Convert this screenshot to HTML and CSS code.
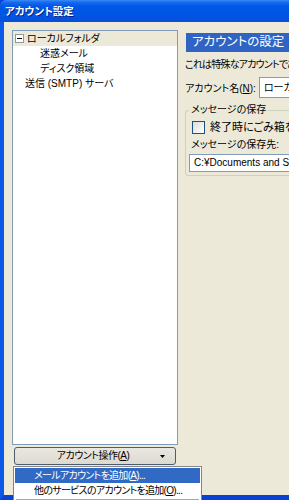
FILE: index.html
```html
<!DOCTYPE html>
<html lang="ja">
<head>
    <meta charset="UTF-8">
    <title>アカウント設定</title>
    <link rel="stylesheet" href="styles.css">
</head>
<body>
    <div class="window">
        <div class="titlebar">アカウント設定</div>
        <div class="frame">
            <div class="dialog">
                <div class="left">
                    <div class="tree">
                        <div class="row root selected">
                            <svg class="exp" width="9" height="9" viewBox="0 0 9 9"><rect x="0.5" y="0.5" width="8" height="8" fill="#fff" stroke="#919b9c"/><path d="M2 4.5h5" stroke="#000"/></svg>
                            <span>ローカルフォルダ</span>
                        </div>
                        <div class="row child">迷惑メール</div>
                        <div class="row child">ディスク領域</div>
                        <div class="row top">送信 (SMTP) サーバ</div>
                    </div>
                    <div class="action-btn">
                        <span>アカウント操作(<u>A</u>)</span>
                        <svg class="arrow" width="5" height="3" viewBox="0 0 5 3"><path d="M0 0h5L2.5 3z" fill="#000"/></svg>
                    </div>
                </div>
                <div class="right">
                    <div class="header">アカウントの設定</div>
                    <p class="note">これは特殊なアカウントであり、関連付けられたユーザ識別子はありません。</p>
                    <div class="field">
                        <label>アカウント名(<u>N</u>):</label>
                        <div class="input name">ローカルフォルダ</div>
                    </div>
                    <fieldset class="group">
                        <legend>メッセージの保存</legend>
                        <div class="check">
                            <span class="box"></span>
                            <span>終了時にごみ箱を空にする(<u>X</u>)</span>
                        </div>
                        <div class="sub">メッセージの保存先:</div>
                        <div class="input path">C:¥Documents and Settings¥user¥Application Data¥Thunderbird</div>
                    </fieldset>
                </div>
            </div>
        </div>

        <div class="menu">
            <div class="item active">メールアカウントを追加(<u>A</u>)...</div>
            <div class="item">他のサービスのアカウントを追加(<u>O</u>)...</div>
            <div class="sep"></div>
        </div>
    </div>
</body>
</html>
```

FILE: styles.css
```css
body {
    margin: 0;
    padding: 0;
    font-family: "Liberation Sans", "Noto Sans CJK JP", sans-serif;
    font-size: 10px;
    font-feature-settings: "palt";
    color: #000;
}
.window {
    position: relative;
    width: 289px;
    height: 500px;
    overflow: hidden;
    display: flex;
    flex-direction: column;
    background: #0842d4;
}
.titlebar {
    height: 22px;
    line-height: 22px;
    padding-left: 5px;
    color: #fff;
    font-weight: bold;
    font-size: 10.5px;
    text-shadow: 1px 1px 0 #0a1e8a;
    border-top-left-radius: 6px;
    background: linear-gradient(to bottom, #3d8bf5 0, #1a6cf0 2px, #0058e6 6px, #0055e3 16px, #0a4cd8 22px);
}
.frame {
    flex: 1;
    display: flex;
    border-left: 4px solid #0a58e8;
    border-bottom: 5px solid #0842d4;
    min-height: 0;
}
.dialog {
    flex: 1;
    display: flex;
    gap: 5px;
    padding: 8px 0 0 8px;
    background: #ece9d8;
    overflow: hidden;
}
.left {
    width: 166px;
    flex: none;
    display: flex;
    flex-direction: column;
}
.tree {
    height: 413px;
    background: #fff;
    border: 1px solid #7f9db9;
}
.row {
    height: 15px;
    line-height: 15px;
    white-space: nowrap;
    display: flex;
    align-items: center;
}
.row.selected {
    background: #ece9d8;
}
.root {
    padding-left: 2px;
}
.exp {
    margin-right: 3px;
}
.child {
    padding-left: 27px;
}
.top {
    padding-left: 12px;
}
.action-btn {
    margin: 2px 2px 0 2px;
    height: 16px;
    border: 1px solid #4d5c73;
    border-radius: 3px;
    background: linear-gradient(to bottom, #e9e8e1, #dcdad0);
    display: flex;
    align-items: center;
    justify-content: center;
    position: relative;
    line-height: 16px;
    letter-spacing: -0.5px;
}
.action-btn span {
    margin-right: 4px;
}
.action-btn .arrow {
    position: absolute;
    right: 10px;
    top: 7px;
}
.right {
    width: 330px;
    flex: none;
    padding-top: 3px;
}
.header {
    margin-left: 3px;
    height: 19px;
    line-height: 19px;
    padding-left: 6px;
    background: #2f64c4;
    color: #fff;
    font-size: 12.5px;
    white-space: nowrap;
}
.note {
    margin: 6px 0 0 2px;
    line-height: 14px;
    white-space: nowrap;
    letter-spacing: -0.8px;
}
.field {
    display: flex;
    align-items: center;
    margin: 5px 0 0 2px;
    gap: 3px;
}
.input {
    height: 19px;
    line-height: 19px;
    border: 1px solid #7f9db9;
    background: #fff;
    padding-left: 4px;
    white-space: nowrap;
    overflow: hidden;
}
.input.name {
    width: 200px;
}
.group {
    margin: 5px 0 0 2px;
    padding: 0 0 7px 3px;
    border: 1px solid #d0d0bf;
    border-radius: 3px;
    height: 64px;
}
.group legend {
    padding: 0 2px;
    margin-left: 0;
    line-height: 14px;
}
.check {
    display: flex;
    align-items: center;
    gap: 5px;
    margin: 3px 0 0 3px;
    white-space: nowrap;
    line-height: 14px;
    font-size: 11px;
}
.check .box {
    width: 11px;
    height: 11px;
    border: 1px solid #1c5180;
    background: linear-gradient(135deg, #dcdcd7, #fff);
}
.sub {
    margin: 4px 0 0 2px;
    line-height: 14px;
}
.input.path {
    margin-top: 2px;
    height: 16px;
    line-height: 16px;
    width: 300px;
}
.menu {
    position: absolute;
    left: 13px;
    top: 466px;
    width: 187px;
    height: 40px;
    padding: 1px 0 0 0;
    background: #fff;
    border: 1px solid #868686;
    letter-spacing: -0.7px;
}
.menu .item {
    height: 15px;
    line-height: 15px;
    padding-left: 19px;
    margin: 0 1px;
    white-space: nowrap;
}
.menu .item.active {
    background: #316ac5;
    color: #fff;
}
.menu .sep {
    margin: 1px 2px 0;
    border-top: 1px solid #aca899;
}
```
